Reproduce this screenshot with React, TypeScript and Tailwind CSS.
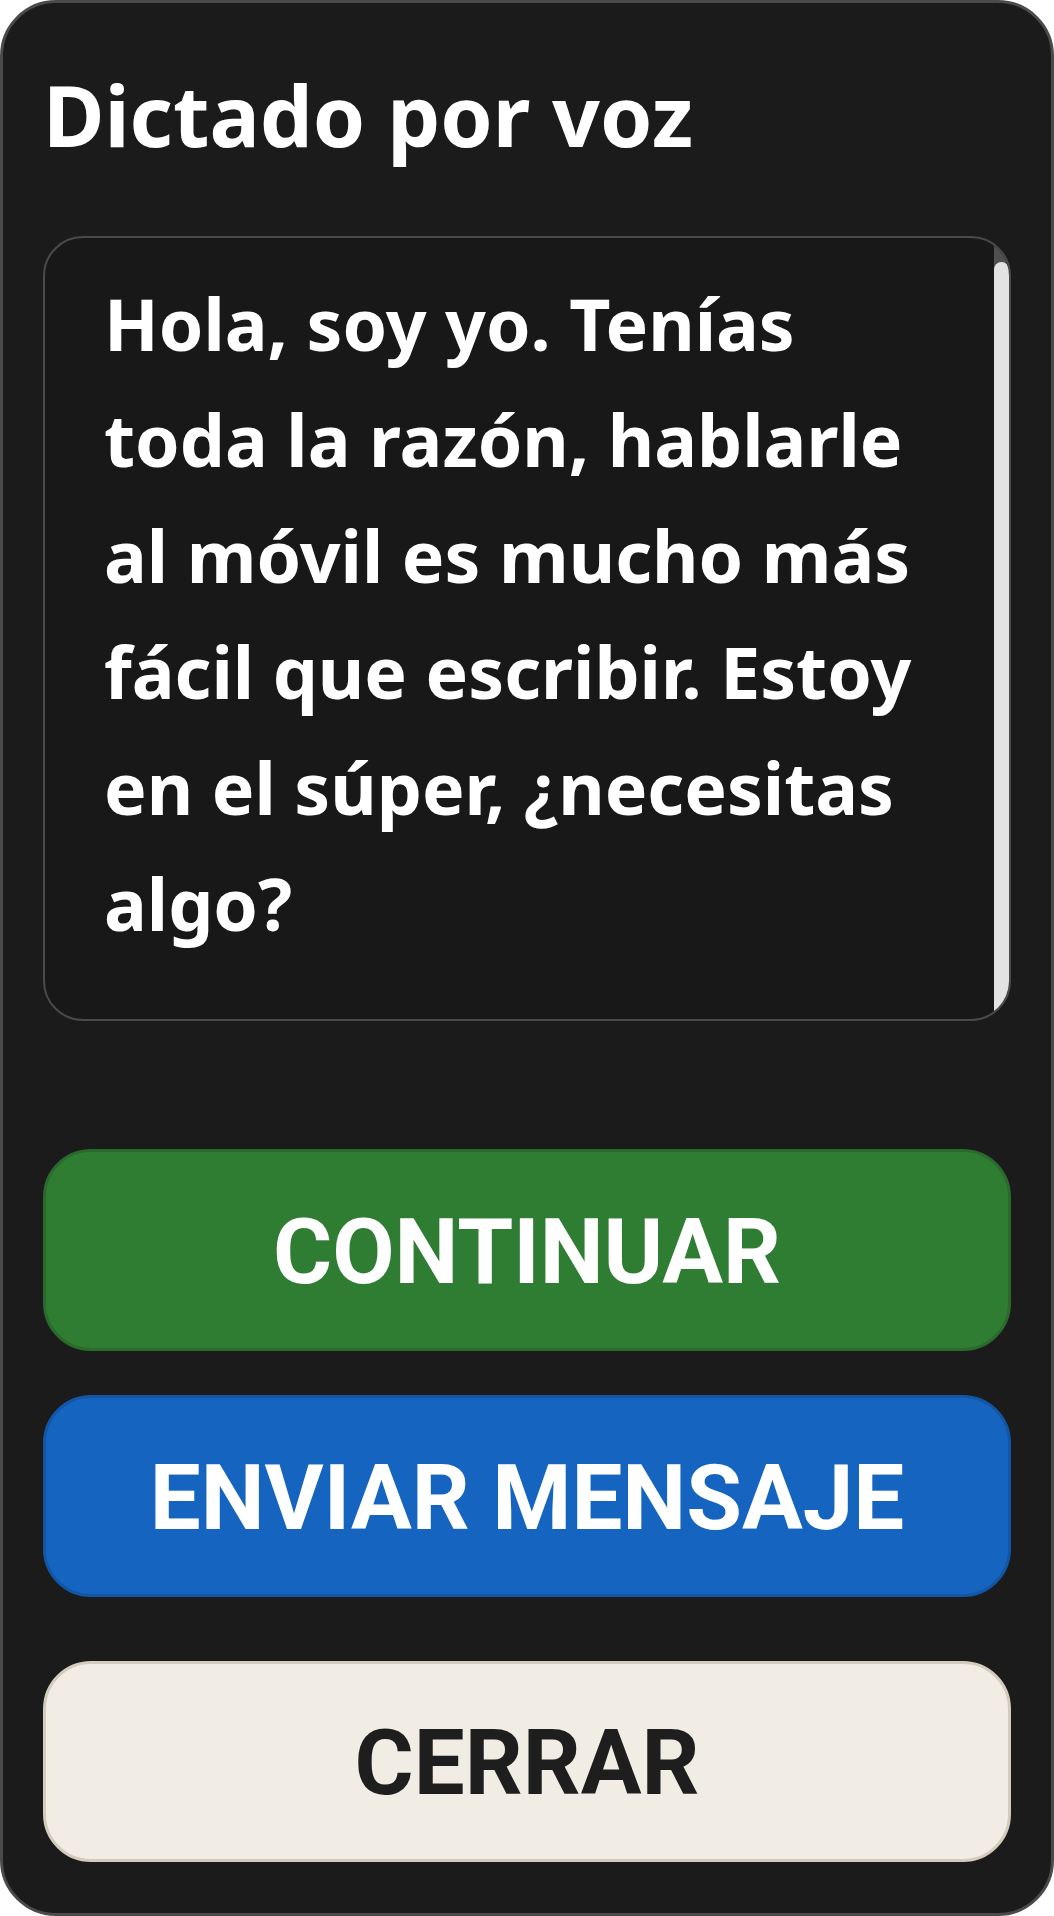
import React from 'react';

const message =
  'Hola, soy yo. Tenías toda la razón, hablarle al móvil es mucho más fácil que escribir. Estoy en el súper, ¿necesitas algo?';

const App: React.FC = () => {
  return (
    <div className="bg-white w-[1054px] h-[1916px]">
      <div className="box-border flex h-[1916px] w-[1054px] flex-col rounded-[56px] border-[3px] border-[#4a4a4a] bg-[#1b1b1b] px-[40px] pt-[54px] pb-[51px]">
        <h1 className="font-['Noto_Sans',sans-serif] text-[84px] font-bold leading-[116px] text-white">
          Dictado por voz
        </h1>

        {/* transcript box, scrollbar drawn as its own column */}
        <div className="mt-[63px] flex h-[785px] overflow-hidden rounded-[40px] border-2 border-[#4a4a4a] bg-[#181818]">
          <p className="flex-1 pt-[28px] pl-[59px] pr-[50px] font-['Noto_Sans',sans-serif] text-[71.5px] font-bold leading-[116px] text-white">
            {message}
          </p>
          <div className="flex w-[15px] flex-col bg-[#505050]">
            <div className="mt-[24px] flex-1 rounded-t-full bg-[#e2e2e2]" />
          </div>
        </div>

        <div className="mt-[128px] flex flex-col">
          <button className="flex h-[202px] items-center justify-center rounded-[48px] border-[3px] border-[#2a6b2d] bg-[#2e7d32] pt-[5px] font-['Roboto',sans-serif] text-[90.5px] font-bold text-white">
            CONTINUAR
          </button>
          <button className="mt-[44px] flex h-[202px] items-center justify-center rounded-[48px] border-[3px] border-[#1257a6] bg-[#1565c0] pt-[5px] font-['Roboto',sans-serif] text-[90.5px] font-bold text-white">
            ENVIAR MENSAJE
          </button>
          <button className="mt-[64px] flex h-[201px] items-center justify-center rounded-[48px] border-[3px] border-[#d3cbbb] bg-[#f1ede5] pt-[5px] font-['Roboto',sans-serif] text-[90.5px] font-bold text-[#1e1e1e]">
            CERRAR
          </button>
        </div>
      </div>
    </div>
  );
};

export default App;
